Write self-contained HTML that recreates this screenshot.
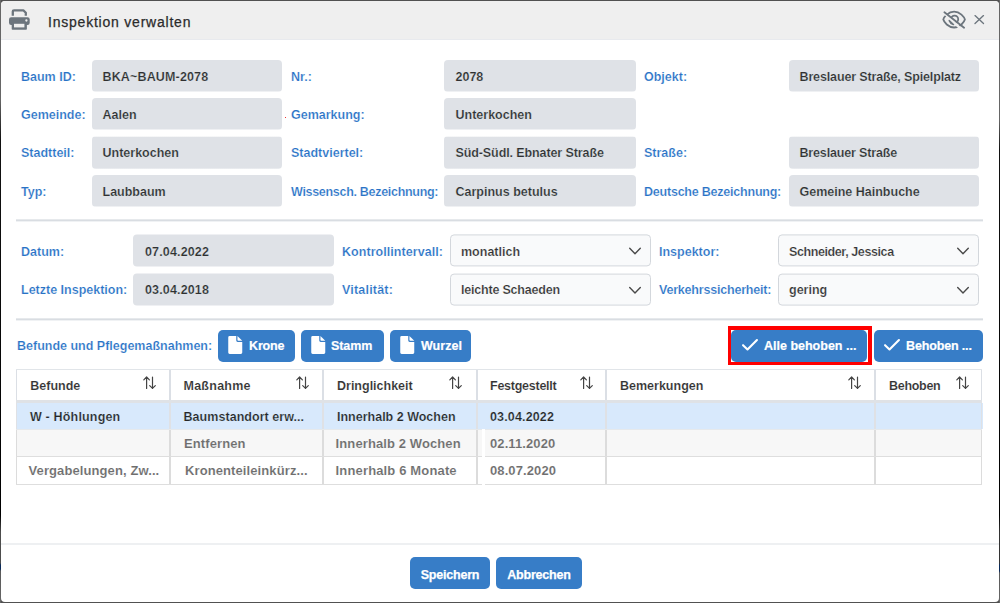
<!DOCTYPE html>
<html lang="de">
<head>
<meta charset="utf-8">
<title>Inspektion verwalten</title>
<style>
*{box-sizing:border-box;margin:0;padding:0}
html,body{width:1000px;height:603px;overflow:hidden;background:#515151;font-family:"Liberation Sans",sans-serif}
.abs{position:absolute}
#edgeL{position:absolute;left:0;top:0;width:1px;height:603px;background:linear-gradient(#666 0,#666 100px,#111 140px,#000 515px,#4d4d4d 532px,#4d4d4d 563px,#0a2a5a 565px,#0a2a5a 569px,#5a5a5a 571px,#666 603px)}
#edgeR{position:absolute;left:999px;top:0;width:1px;height:603px;background:linear-gradient(#666 0,#666 120px,#111 150px,#000 515px,#333 532px,#333 563px,#0a2a5a 565px,#0a2a5a 571px,#5a5a5a 573px,#666 603px)}
#dlg{position:absolute;left:1px;top:1px;width:998px;height:600.5px;background:#fff;border-radius:4px;overflow:hidden}
#c{position:absolute;left:-1px;top:-1px;width:1000px;height:603px}
#hdr{position:absolute;left:0;top:0;width:1000px;height:40px;background:#efefef}
#title{position:absolute;left:48px;top:13px;font-size:14px;letter-spacing:.78px;color:#2b2b2b;-webkit-text-stroke:.25px #2b2b2b;white-space:nowrap;line-height:18px}
.lbl{-webkit-text-stroke:.2px #fff;position:absolute;font-size:12.5px;font-weight:bold;color:#2872c6;white-space:nowrap;line-height:32px;height:32px;padding-top:1px}
.fld{-webkit-text-stroke:.2px #dfe2e7;position:absolute;height:32px;background:linear-gradient(#dfe2e7 0,#dfe2e7 31px,rgba(223,226,231,.5) 31px);border-radius:4px;font-size:12.5px;font-weight:bold;color:#303030;line-height:32px;padding-top:1px;padding-left:10.5px;white-space:nowrap;overflow:hidden}
.sel{-webkit-text-stroke:.2px #f9fafb;position:absolute;height:32px;background:#f9fafb;border:1px solid #d3d7dc;border-radius:4px;font-size:12.5px;font-weight:bold;color:#333;line-height:30px;padding-top:1px;padding-left:10px;white-space:nowrap;overflow:hidden}
.sel svg{position:absolute;right:8px;top:11px}
.hr{position:absolute;left:16px;width:967px;height:3px;background:linear-gradient(#e6e9ec 0,#e6e9ec 1px,#d9dde2 1px,#d9dde2 2px,#f0f2f4 2px,#f0f2f4 3px)}
.btn{position:absolute;height:32px;background:#377dc7;border-radius:5px;color:#fff;font-size:12.5px;font-weight:bold;line-height:32px;padding-top:1px;white-space:nowrap}
.btn span{position:absolute;top:0;-webkit-text-stroke:.2px #fff}
.btn svg{position:absolute}
.bb{text-align:center;letter-spacing:-.2px;padding-top:2px;-webkit-text-stroke:.25px #fff}
#tbl{position:absolute;left:16px;top:369px;width:967px;height:117px}
.rb{position:absolute;left:0;width:966px}
.vb{position:absolute;top:0;height:116px;background:linear-gradient(#dbdfe5 0,#dbdfe5 34px,#dfe1e5 34px,#dfe1e5 60px,#dcdcdc 60px,#dcdcdc 116px)}
.th{-webkit-text-stroke:.12px #fff;position:absolute;top:1px;height:30px;font-size:12.5px;font-weight:bold;color:#333;line-height:30px;padding-top:1px;padding-left:14px;white-space:nowrap}
.td{position:absolute;font-size:12.5px;font-weight:bold;white-space:nowrap;padding-left:14px}
.r1{-webkit-text-stroke:.2px #d8e9fc;top:34px;height:26px;line-height:28px;color:#262626}
.r2{-webkit-text-stroke:.1px #f7f7f7;top:61px;height:27px;line-height:28px;color:#6e6e6e;font-size:13px;letter-spacing:.1px;padding-left:13px}
.r3{-webkit-text-stroke:.1px #fff;top:88px;height:27px;line-height:28px;color:#6e6e6e;font-size:13px;letter-spacing:.1px;padding-left:13px}
.f3{height:33px;background:linear-gradient(rgba(223,226,231,.3) 0,rgba(223,226,231,.3) 1px,#dfe2e7 1px,#dfe2e7 32px,rgba(223,226,231,.7) 32px);line-height:32px}
.f5{background:#dfe2e7}
</style>
</head>
<body>
<div id="edgeL"></div><div id="edgeR"></div>
<div id="dlg"><div id="c">
<div id="hdr"></div><div class="abs" style="left:0;top:39px;width:1000px;height:1px;background:#e8eaee"></div>
<svg class="abs" style="left:9px;top:9px" width="21" height="21" viewBox="0 0 21 21"><path d="M3.8 6.7V2.5Q3.8 1.3 5 1.3H14.3L16.8 3.8V6.7" fill="none" stroke="#6c757d" stroke-width="2.3" stroke-linejoin="round"/><rect x="0" y="8.2" width="20.7" height="7.7" rx="2.2" fill="#6c757d"/><rect x="2.7" y="13" width="15.2" height="7.7" rx=".8" fill="#6c757d"/><rect x="5" y="14.8" width="10.4" height="3.6" fill="#efefef"/><circle cx="17.4" cy="11.5" r="1.15" fill="#efefef"/></svg>
<div id="title">Inspektion verwalten</div>
<svg class="abs" style="left:941px;top:9px" width="26" height="22" viewBox="0 0 26 22" fill="none" stroke="#6c757d" stroke-width="1.8" stroke-linecap="round" stroke-linejoin="round"><path d="M2.3 10.6C3 8 7.2 2.7 13.1 2.7C19 2.7 23.2 8 23.9 10.6C23.2 13.2 19 18.5 13.1 18.5C7.2 18.5 3 13.2 2.3 10.6Z"/><circle cx="13.6" cy="10.2" r="3.6"/><path d="M8.6 11.6Q9.6 14.4 12.4 15.2" stroke-width="2.2"/><path d="M4.2 1.8L22.6 19.6" stroke="#efefef" stroke-width="2.6" stroke-linecap="butt" transform="translate(-1.5 1.5)"/><path d="M3.4 3.2L23.1 18.8"/></svg>
<svg class="abs" style="left:973px;top:13px" width="13" height="13" viewBox="0 0 13 13" fill="none" stroke="#6c757d" stroke-width="1.35" stroke-linecap="round"><path d="M2 2.6L10.5 10.55M10.5 2.6L2 10.55"/></svg>
<div class="lbl" style="left:21px;top:60px">Baum ID:</div><div class="fld" style="left:92px;top:60px;width:190px"><span style="letter-spacing:0.15px">BKA~BAUM-2078</span></div>
<div class="lbl" style="left:291px;top:60px">Nr.:</div><div class="fld" style="left:444px;top:60px;width:192px;padding-left:11.5px">2078</div>
<div class="lbl" style="left:644px;top:60px">Objekt:</div><div class="fld" style="left:789px;top:60px;width:190px"><span style="letter-spacing:-0.14px">Breslauer Straße, Spielplatz</span></div>
<div class="lbl" style="left:21px;top:98px">Gemeinde:</div><div class="fld" style="left:92px;top:98px;width:190px">Aalen</div>
<div class="lbl" style="left:291px;top:98px">Gemarkung:</div><div class="fld" style="left:444px;top:98px;width:192px;padding-left:11.5px">Unterkochen</div>
<div class="lbl" style="left:21px;top:136px">Stadtteil:</div><div class="fld f3" style="left:92px;top:136px;width:190px">Unterkochen</div>
<div class="lbl" style="left:291px;top:136px">Stadtviertel:</div><div class="fld f3" style="left:444px;top:136px;width:192px;padding-left:11.5px"><span style="letter-spacing:-0.1px">Süd-Südl. Ebnater Straße</span></div>
<div class="lbl" style="left:644px;top:136px">Straße:</div><div class="fld f3" style="left:789px;top:136px;width:190px"><span style="letter-spacing:-0.16px">Breslauer Straße</span></div>
<div class="lbl" style="left:21px;top:175px">Typ:</div><div class="fld" style="left:92px;top:175px;width:190px">Laubbaum</div>
<div class="lbl" style="left:291px;top:175px"><span style="letter-spacing:-0.3px">Wissensch. Bezeichnung:</span></div><div class="fld" style="left:444px;top:175px;width:192px;padding-left:11.5px">Carpinus betulus</div>
<div class="lbl" style="left:644px;top:175px"><span style="letter-spacing:-0.22px">Deutsche Bezeichnung:</span></div><div class="fld" style="left:789px;top:175px;width:190px">Gemeine Hainbuche</div>
<div class="abs" style="left:285px;top:117px;width:1px;height:1px;background:#e33"></div>
<div class="hr" style="top:219px"></div>
<div class="lbl" style="left:21px;top:234px;padding-top:2px;transform:translateY(.4px);">Datum:</div><div class="fld f5" style="left:133px;top:234px;width:201px;padding-left:12px;padding-top:2px;transform:translateY(.4px);"><span style="letter-spacing:0.15px">07.04.2022</span></div>
<div class="lbl" style="left:342px;top:234px;padding-top:2px;transform:translateY(.4px);"><span style="letter-spacing:0.05px">Kontrollintervall:</span></div><div class="sel" style="left:450px;top:234px;width:201px;padding-top:2px;transform:translateY(.4px);">monatlich<svg width="14" height="9" viewBox="0 0 14 9" fill="none" stroke="#4a4a4a" stroke-width="1.4" stroke-linecap="round" stroke-linejoin="round"><path d="M1.7 1.9L7 7.3L12.3 1.9"/></svg></div>
<div class="lbl" style="left:659px;top:234px;padding-top:2px;transform:translateY(.4px);">Inspektor:</div><div class="sel" style="left:778px;top:234px;width:201px;padding-top:2px;transform:translateY(.4px);"><span style="letter-spacing:-0.4px">Schneider, Jessica</span><svg width="14" height="9" viewBox="0 0 14 9" fill="none" stroke="#4a4a4a" stroke-width="1.4" stroke-linecap="round" stroke-linejoin="round"><path d="M1.7 1.9L7 7.3L12.3 1.9"/></svg></div>
<div class="lbl" style="left:21px;top:273px;padding-top:0;transform:translateY(.6px);">Letzte Inspektion:</div><div class="fld f5" style="left:133px;top:273px;width:201px;padding-left:12px;padding-top:0;transform:translateY(.6px);"><span style="letter-spacing:0.15px">03.04.2018</span></div>
<div class="lbl" style="left:342px;top:273px;padding-top:0;transform:translateY(.6px);"><span style="letter-spacing:0.2px">Vitalität:</span></div><div class="sel" style="left:450px;top:273px;width:201px;padding-top:0;transform:translateY(.6px);"><span style="letter-spacing:-0.2px">leichte Schaeden</span><svg width="14" height="9" viewBox="0 0 14 9" fill="none" stroke="#4a4a4a" stroke-width="1.4" stroke-linecap="round" stroke-linejoin="round"><path d="M1.7 1.9L7 7.3L12.3 1.9"/></svg></div>
<div class="lbl" style="left:659px;top:273px;padding-top:0;transform:translateY(.6px);"><span style="letter-spacing:-0.2px">Verkehrssicherheit:</span></div><div class="sel" style="left:778px;top:273px;width:201px;padding-top:0;transform:translateY(.6px);">gering<svg width="14" height="9" viewBox="0 0 14 9" fill="none" stroke="#4a4a4a" stroke-width="1.4" stroke-linecap="round" stroke-linejoin="round"><path d="M1.7 1.9L7 7.3L12.3 1.9"/></svg></div>
<div class="hr" style="top:318px"></div>
<div class="lbl" style="left:17px;top:329px">Befunde und Pflegemaßnahmen:</div>
<div class="btn" style="left:218px;top:330px;width:77px"><svg style="left:10.3px;top:6px" width="14.5" height="18" viewBox="0 0 14 18"><path d="M1.4 0H8V4.6Q8 6 9.4 6H14V16.6Q14 18 12.6 18H1.4Q0 18 0 16.6V1.4Q0 0 1.4 0Z" fill="#fff"/><path d="M9.2 0L14 4.8H10Q9.2 4.8 9.2 4Z" fill="#fff"/></svg><span style="left:31px;letter-spacing:-0.15px">Krone</span></div>
<div class="btn" style="left:301px;top:330px;width:83px"><svg style="left:10.3px;top:6px" width="14.5" height="18" viewBox="0 0 14 18"><path d="M1.4 0H8V4.6Q8 6 9.4 6H14V16.6Q14 18 12.6 18H1.4Q0 18 0 16.6V1.4Q0 0 1.4 0Z" fill="#fff"/><path d="M9.2 0L14 4.8H10Q9.2 4.8 9.2 4Z" fill="#fff"/></svg><span style="left:30px;letter-spacing:-0.1px">Stamm</span></div>
<div class="btn" style="left:390px;top:330px;width:81px"><svg style="left:10.3px;top:6px" width="14.5" height="18" viewBox="0 0 14 18"><path d="M1.4 0H8V4.6Q8 6 9.4 6H14V16.6Q14 18 12.6 18H1.4Q0 18 0 16.6V1.4Q0 0 1.4 0Z" fill="#fff"/><path d="M9.2 0L14 4.8H10Q9.2 4.8 9.2 4Z" fill="#fff"/></svg><span style="left:31px;letter-spacing:0.05px">Wurzel</span></div>
<div class="abs" style="left:728px;top:326px;width:144px;height:39px;border:3.4px solid #f00;border-top-width:4px;border-right-width:4px"></div>
<div class="btn" style="left:731px;top:330px;width:136px"><svg style="left:9px;top:8px" width="20" height="14" viewBox="0 0 20 14" fill="none" stroke="#fff" stroke-width="2.1" stroke-linecap="round" stroke-linejoin="round"><path d="M3.05 7.2L7.5 11.45L16.95 2.05"/></svg><span style="left:33px">Alle behoben ...</span></div>
<div class="btn" style="left:874px;top:330px;width:109px"><svg style="left:8px;top:8px" width="20" height="14" viewBox="0 0 20 14" fill="none" stroke="#fff" stroke-width="2.1" stroke-linecap="round" stroke-linejoin="round"><path d="M3.05 7.2L7.5 11.45L16.95 2.05"/></svg><span style="left:32px;letter-spacing:-.15px">Behoben ...</span></div>
<div id="tbl">
<div class="rb" style="top:34px;height:26px;background:#d8e9fc;width:967px"></div>
<div class="rb" style="top:60.5px;height:27px;background:#f7f7f7"></div>
<div class="vb" style="left:0px;width:1px"></div>
<div class="vb" style="left:153px;width:2px"></div>
<div class="vb" style="left:306px;width:2px"></div>
<div class="vb" style="left:459.6px;width:2px"></div>
<div class="vb" style="left:589px;width:2.4px"></div>
<div class="vb" style="left:858px;width:2px"></div>
<div class="vb" style="left:965px;width:1px"></div>
<div class="rb" style="top:0;height:1px;background:#e1e5e9"></div>
<div class="rb" style="top:30.5px;height:3.5px;background:#dfe2e6"></div>
<div class="rb" style="top:59.5px;height:1px;background:#e6e9ec"></div>
<div class="rb" style="top:87px;height:1px;background:#dedede"></div>
<div class="rb" style="top:115px;height:1px;background:#dedede"></div>
<div class="th" style="left:0.30000000000000004px">Befunde</div><svg class="abs" style="left:127px;top:7px" width="14" height="14" viewBox="0 0 14 14" fill="none" stroke="#444" stroke-width="1.2" stroke-linecap="round" stroke-linejoin="round"><path d="M3.6 12.4V1M.8 3.8L3.6 1L6.4 3.8M9.5 1V12.4M6.7 9.6L9.5 12.4L12.3 9.6"/></svg>
<div class="th" style="left:153.5px"><span style="letter-spacing:0.25px">Maßnahme</span></div><svg class="abs" style="left:280px;top:7px" width="14" height="14" viewBox="0 0 14 14" fill="none" stroke="#444" stroke-width="1.2" stroke-linecap="round" stroke-linejoin="round"><path d="M3.6 12.4V1M.8 3.8L3.6 1L6.4 3.8M9.5 1V12.4M6.7 9.6L9.5 12.4L12.3 9.6"/></svg>
<div class="th" style="left:307px">Dringlichkeit</div><svg class="abs" style="left:433px;top:7px" width="14" height="14" viewBox="0 0 14 14" fill="none" stroke="#444" stroke-width="1.2" stroke-linecap="round" stroke-linejoin="round"><path d="M3.6 12.4V1M.8 3.8L3.6 1L6.4 3.8M9.5 1V12.4M6.7 9.6L9.5 12.4L12.3 9.6"/></svg>
<div class="th" style="left:460px"><span style="letter-spacing:-0.25px">Festgestellt</span></div><svg class="abs" style="left:564px;top:7px" width="14" height="14" viewBox="0 0 14 14" fill="none" stroke="#444" stroke-width="1.2" stroke-linecap="round" stroke-linejoin="round"><path d="M3.6 12.4V1M.8 3.8L3.6 1L6.4 3.8M9.5 1V12.4M6.7 9.6L9.5 12.4L12.3 9.6"/></svg>
<div class="th" style="left:590px">Bemerkungen</div><svg class="abs" style="left:832px;top:7px" width="14" height="14" viewBox="0 0 14 14" fill="none" stroke="#444" stroke-width="1.2" stroke-linecap="round" stroke-linejoin="round"><path d="M3.6 12.4V1M.8 3.8L3.6 1L6.4 3.8M9.5 1V12.4M6.7 9.6L9.5 12.4L12.3 9.6"/></svg>
<div class="th" style="left:859px"><span style="letter-spacing:-0.3px">Behoben</span></div><svg class="abs" style="left:940px;top:7px" width="14" height="14" viewBox="0 0 14 14" fill="none" stroke="#444" stroke-width="1.2" stroke-linecap="round" stroke-linejoin="round"><path d="M3.6 12.4V1M.8 3.8L3.6 1L6.4 3.8M9.5 1V12.4M6.7 9.6L9.5 12.4L12.3 9.6"/></svg>
<div class="td r1" style="left:0px"><span style="letter-spacing:0.17px">W - Höhlungen</span></div>
<div class="td r1" style="left:153.5px"><span style="letter-spacing:0.05px">Baumstandort erw...</span></div>
<div class="td r1" style="left:307px">Innerhalb 2 Wochen</div>
<div class="td r1" style="left:460px"><span style="letter-spacing:0.15px">03.04.2022</span></div>
<div class="td r2" style="left:155px">Entfernen</div>
<div class="td r2" style="left:306.6px">Innerhalb 2 Wochen</div>
<div class="td r2" style="left:461px">02.11.2020</div>
<div class="td r3" style="left:-0.5px">Vergabelungen, Zw...</div>
<div class="td r3" style="left:156px">Kronenteileinkürz...</div>
<div class="td r3" style="left:306.6px"><span style="letter-spacing:0.15px">Innerhalb 6 Monate</span></div>
<div class="td r3" style="left:461px">08.07.2020</div>
</div>
<div class="abs" style="left:482px;top:429px;width:3px;height:57px;background:#fff"></div>
<div class="abs" style="left:1px;top:543px;width:998px;height:2px;background:#eef0f2"></div>
<div class="btn bb" style="left:410px;top:557px;width:80px">Speichern</div>
<div class="btn bb" style="left:496px;top:557px;width:86px">Abbrechen</div>
</div></div>
</body>
</html>
